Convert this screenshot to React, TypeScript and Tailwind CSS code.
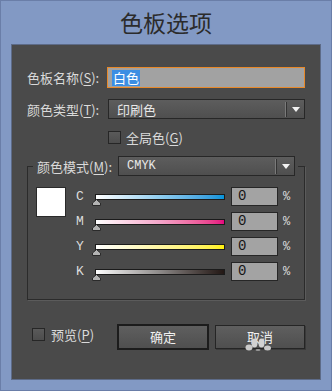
import React from "react";

const mono = "font-['Liberation_Mono',monospace]";

const Label = ({ text, k, className = "" }: { text: string; k: string; className?: string }) => (
  <span className={`text-[13px] leading-none text-[#dadada] ${className}`}>
    {text}(<span className="underline underline-offset-2">{k}</span>):
  </span>
);

const Select = ({ value, className = "", valueClass = "" }: { value: string; className?: string; valueClass?: string }) => (
  <div
    className={`flex h-[20px] items-center border border-[#272727] bg-linear-to-b from-[#5d5d5d] to-[#4f4f4f] pl-[8px] text-[#e8e8e8] ${className}`}
  >
    <span className={`flex-1 leading-none ${valueClass}`}>{value}</span>
    <span className="h-[15px] w-px bg-[#7a7a7a]" />
    <span className="h-[15px] w-px bg-[#333333]" />
    <span className="flex w-[17px] justify-center">
      <svg width="8" height="5" viewBox="0 0 8 5">
        <path d="M0 0h8L4 5z" fill="#f2f2f2" />
      </svg>
    </span>
  </div>
);

const Checkbox = () => (
  <span className="block h-[13px] w-[13px] border border-[#262626] bg-linear-to-b from-[#5a5a5a] to-[#4d4d4d]" />
);

type Row = { label: string; bar: string };

const rows: Row[] = [
  { label: "C", bar: "bg-linear-to-r from-white via-[#8fcdef] to-[#0093d9]" },
  { label: "M", bar: "bg-linear-to-r from-white via-[#f3a5c9] to-[#e4007f]" },
  { label: "Y", bar: "bg-linear-to-r from-white via-[#fff6a0] to-[#fff000]" },
  { label: "K", bar: "bg-linear-to-r from-white via-[#8d8a89] to-[#231815]" },
];

const SliderRow = ({ label, bar }: Row) => (
  <div className="flex h-[19px] items-center">
    <span className={`w-[20px] text-center text-[13px] text-[#dcdcdc] ${mono}`}>{label}</span>
    <div className={`relative ml-[5px] h-[6px] w-[130px] border border-[#1b1b1b] ${bar}`}>
      <svg className="absolute left-[-4px] top-full" width="9" height="7" viewBox="0 0 9 7">
        <path d="M4.5 0.5L8.5 4v2.5H0.5V4z" fill="#b3b3b3" stroke="#2a2a2a" />
      </svg>
    </div>
    <div className={`ml-[6px] flex h-[19px] w-[47px] items-center border border-[#262626] bg-[#a3a3a3] pl-[6px] text-[14px] text-[#151515] ${mono}`}>
      0
    </div>
    <span className={`ml-[5px] text-[12px] text-[#dcdcdc] ${mono}`}>%</span>
  </div>
);

export default function App() {
  return (
    <div className="flex h-[391px] w-[332px] flex-col border border-[#6a7ea8] bg-[#8299c4] font-['Noto_Sans_CJK_SC',sans-serif]">
      <div className="flex h-[43px] items-center justify-center text-[23px] leading-none text-[#2b2b2b]">
        色板选项
      </div>

      <div className="ml-[10px] flex h-[336px] w-[310px] flex-col border border-[#5d6b88] bg-[#4a4a4a] px-[15px] pt-[22px]">
        {/* name */}
        <div className="flex items-center">
          <Label text="色板名称" k="S" className="w-[80px]" />
          <div className="flex h-[21px] flex-1 items-center border border-[#e8892a] bg-[#a2a2a2] pl-[4px]">
            <span className="bg-[#3c8ee3] px-px text-[13px] leading-[16px] text-white">白色</span>
          </div>
        </div>

        {/* type */}
        <div className="mt-[11px] flex items-center">
          <Label text="颜色类型" k="T" className="w-[81px]" />
          <Select value="印刷色" className="flex-1" valueClass="text-[13px]" />
        </div>

        {/* global */}
        <div className="mt-[12px] flex h-[13px] items-center pl-[81px]">
          <Checkbox />
          <span className="ml-[5px] text-[13px] leading-none text-[#dadada]">
            全局色(<span className="underline underline-offset-2">G</span>)
          </span>
        </div>

        {/* color mode group */}
        <fieldset className="mt-[12px] border border-[#2b2b2b] shadow-[1px_1px_0_#5b5b5b]">
          <legend className="ml-[5px] px-[3px]">
            <div className="flex items-center pl-px">
              <Label text="颜色模式" k="M" className="w-[81px]" />
              <Select value="CMYK" className="w-[177px]" valueClass={`text-[12px] ${mono}`} />
            </div>
          </legend>
          <div className="mt-[11px] flex pb-[18px] pl-[8px]">
            <div className="h-[30px] w-[30px] border border-[#2a2a2a] bg-white" />
            <div className="ml-[4px] flex flex-col gap-[6px]">
              {rows.map((r) => (
                <SliderRow key={r.label} {...r} />
              ))}
            </div>
          </div>
        </fieldset>

        {/* footer */}
        <div className="mt-[24px] flex items-start">
          <div className="mt-[4px] flex w-[90px] items-center pl-[5px]">
            <Checkbox />
            <span className="ml-[6px] text-[13px] leading-none text-[#dadada]">
              预览(<span className="underline underline-offset-2">P</span>)
            </span>
          </div>
          <button className="flex h-[26px] w-[92px] items-center justify-center border-2 border-[#1c1c1c] bg-linear-to-b from-[#5f5f5f] to-[#4f4f4f] text-[13px] text-[#f0f0f0]">
            确定
          </button>
          <button className="relative ml-[6px] mt-px flex h-[24px] w-[90px] items-center justify-center border border-[#252525] bg-linear-to-b from-[#5f5f5f] to-[#4f4f4f] text-[13px] text-[#f0f0f0] shadow-[1px_1px_0_#3a3a3a]">
            取消
            <svg className="absolute left-[29px] top-[12px]" width="27" height="13" viewBox="0 0 27 13">
              <ellipse cx="4" cy="9.5" rx="3.5" ry="3" fill="#c9c9c9" />
              <ellipse cx="9.5" cy="5" rx="3" ry="4.5" fill="#d2d2d2" />
              <ellipse cx="16.5" cy="5" rx="3" ry="4.5" fill="#d2d2d2" />
              <ellipse cx="22.5" cy="10" rx="3.5" ry="2.5" fill="#c9c9c9" />
              <ellipse cx="13" cy="12" rx="2.5" ry="1" fill="#9a9a9a" />
            </svg>
          </button>
        </div>
      </div>
    </div>
  );
}
